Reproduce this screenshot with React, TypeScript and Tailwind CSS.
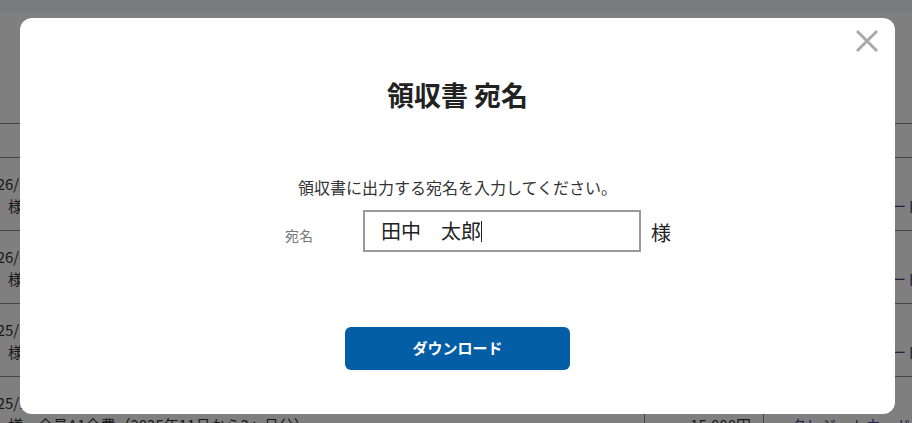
import React from 'react';

const jp = "font-['Noto_Sans_CJK_JP','Noto_Sans',sans-serif]";

const rows = [
  { date: '2026/02/01', item: '会員A1会費（2026年2月から3ヶ月分）', price: '15,000円', pay: 'クレジットカード', indent: 'pl-[37px]' },
  { date: '2026/01/05', item: '会員A1会費（2026年1月から1ヶ月分）', price: '5,000円', pay: 'クレジットカード', indent: 'pl-[37px]' },
  { date: '2025/12/01', item: '会員A1会費（2025年12月から1ヶ月分）', price: '5,000円', pay: 'クレジットカード', indent: 'pl-[37px]' },
  { date: '2025/11/01', item: '会員A1会費（2025年11月から3ヶ月分）', price: '15,000円', pay: 'クレジットカード', indent: 'pl-[27px]' },
];

const BackgroundPage: React.FC = () => {
  return (
    <div className={`h-[423px] overflow-hidden bg-white text-[15px] text-[#333] ${jp}`}>
      <div className="h-[12px] bg-[#f4f6f9]" />
      <div className="h-[111px]" />
      {/* page is scrolled sideways a little */}
      <div className="-ml-[20px] w-[1000px]">
        <div className="h-[35px] border-t border-b border-[#888]" />
        {rows.map((r) => (
          <div key={r.date} className="flex h-[73px] border-b border-[#888] leading-[22px]">
            <div className="w-[664px] pt-[15px]">
              <div>{r.date}</div>
              <div className="pl-[28px]">様　{r.item}</div>
            </div>
            <div className="w-[120px] border-l border-r border-[#888] pt-[15px] pr-[12px] text-right">
              <div>&nbsp;</div>
              <div>{r.price}</div>
            </div>
            <div className={`flex-1 pt-[15px] text-[#4a3f8f] ${r.indent}`}>
              <div>&nbsp;</div>
              <div>{r.pay}</div>
            </div>
          </div>
        ))}
      </div>
    </div>
  );
};

const CloseIcon: React.FC = () => (
  <svg width="24" height="24" viewBox="0 0 24 24" fill="none">
    <path d="M2 2 L22 22 M22 2 L2 22" stroke="#aaaaaa" strokeWidth="3" />
  </svg>
);

const App: React.FC = () => {
  return (
    <div className="relative h-[423px] w-[912px] overflow-hidden">
      <BackgroundPage />

      {/* overlay */}
      <div className="absolute inset-0 bg-black/50" />

      {/* modal */}
      <div
        className={`absolute left-[20px] top-[18px] w-[875px] rounded-xl bg-white pt-[57px] pb-[44px] ${jp}`}
      >
        <button className="absolute right-[16px] top-[11px] p-0">
          <CloseIcon />
        </button>

        <h2 className="text-center text-[27px] font-bold leading-[40px] text-[#222]">
          領収書 宛名
        </h2>

        <p className="mt-[60px] text-center text-[16px] leading-[24px] text-[#333]">
          領収書に出力する宛名を入力してください。
        </p>

        <div className="mt-[11px] flex items-center pl-[265px]">
          <div className="w-[78px] pt-[8px] text-[14px] text-[#777]">宛名</div>
          <div className="flex h-[42px] w-[278px] items-center border-2 border-[#999] pl-[16px] text-[20px] text-[#222]">
            <span>田中　太郎</span>
            <span className="h-[21px] w-px bg-[#222]" />
          </div>
          <div className="ml-[10px] pt-[3px] text-[20px] text-[#222]">様</div>
        </div>

        <div className="mt-[75px] flex justify-center">
          <button className="h-[43px] w-[225px] rounded-md bg-[#045ea5] text-[15px] font-bold text-white">
            ダウンロード
          </button>
        </div>
      </div>
    </div>
  );
};

export default App;
